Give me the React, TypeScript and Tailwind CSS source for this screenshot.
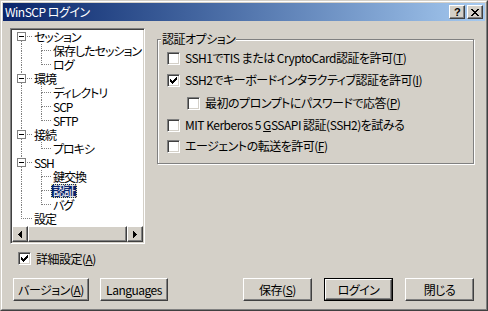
import React from 'react';

// Win2000 style 3D edges
const raised =
  'border border-t-white border-l-white border-r-[#404040] border-b-[#404040] shadow-[inset_-1px_-1px_0_#808080]';
const sunken =
  'border border-t-[#808080] border-l-[#808080] border-r-white border-b-white shadow-[inset_1px_1px_0_#404040,inset_-1px_-1px_0_#d4d0c8]';

type TreeItem = { t: string; l: 0 | 1; first?: boolean; last?: boolean; exp?: boolean; sel?: boolean };

const treeItems: TreeItem[] = [
  { t: 'セッション', l: 0, first: true, exp: true },
  { t: '保存したセッション', l: 1 },
  { t: 'ログ', l: 1, last: true },
  { t: '環境', l: 0, exp: true },
  { t: 'ディレクトリ', l: 1 },
  { t: 'SCP', l: 1 },
  { t: 'SFTP', l: 1, last: true },
  { t: '接続', l: 0, exp: true },
  { t: 'プロキシ', l: 1, last: true },
  { t: 'SSH', l: 0, exp: true },
  { t: '鍵交換', l: 1 },
  { t: '認証', l: 1, sel: true },
  { t: 'バグ', l: 1, last: true },
  { t: '設定', l: 0, last: true },
];

const Check: React.FC<{ checked?: boolean }> = ({ checked }) => (
  <span className={`flex h-[13px] w-[13px] shrink-0 items-center justify-center bg-white ${sunken}`}>
    {checked && (
      <svg width="7" height="7" viewBox="0 0 7 7" shapeRendering="crispEdges">
        <path d="M0 2h1v3H0zM1 3h1v3H1zM2 4h1v3H2zM3 3h1v3H3zM4 2h1v3H4zM5 1h1v3H5zM6 0h1v3H6z" fill="#000" />
      </svg>
    )}
  </span>
);

const Cell: React.FC<{ w: string; up?: boolean; down?: boolean; h?: boolean; box?: boolean }> = ({ w, up, down, h, box }) => (
  <span className={`relative flex h-[14px] shrink-0 flex-col ${w}`}>
    <span className={`ml-[9px] h-[7px] border-dotted border-[#808080] ${up ? 'border-l' : ''} ${h ? 'border-b' : ''}`} />
    <span className={`ml-[9px] h-[7px] border-dotted border-[#808080] ${down ? 'border-l' : ''}`} />
    {box && (
      <span className="absolute left-[5px] top-[2px] flex h-[9px] w-[9px] items-center justify-center border border-[#808080] bg-white">
        <span className="h-px w-[5px] bg-black" />
      </span>
    )}
  </span>
);

const TreeRow: React.FC<{ item: TreeItem }> = ({ item }) => (
  <div className="flex h-[14px] items-center">
    {item.l === 0 ? (
      <Cell w="w-[20px]" up={!item.first} down={!item.last} h box={item.exp} />
    ) : (
      <>
        <Cell w="w-[20px]" up down />
        <Cell w="w-[19px]" up down={!item.last} h />
      </>
    )}
    <span
      className={`h-[14px] whitespace-nowrap px-[1px] leading-[12px] tracking-[-1px] ${
        item.sel ? 'border border-dotted border-[#e8e4a0] bg-[#0a246a] text-white' : 'border border-transparent'
      }`}
    >
      {item.t}
    </span>
  </div>
);

const Arrow: React.FC<{ dir: 'left' | 'right' }> = ({ dir }) => (
  <span className={`flex h-[16px] w-[16px] shrink-0 items-center justify-center bg-[#d4d0c8] ${raised}`}>
    <svg width="4" height="7" viewBox="0 0 4 7" shapeRendering="crispEdges">
      {dir === 'left' ? (
        <path d="M0 3h1v1H0zM1 2h1v3H1zM2 1h1v5H2zM3 0h1v7H3z" fill="#000" />
      ) : (
        <path d="M3 3h1v1H3zM2 2h1v3H2zM1 1h1v5H1zM0 0h1v7H0z" fill="#000" />
      )}
    </svg>
  </span>
);

const Btn: React.FC<{ w: string; isDefault?: boolean; children: React.ReactNode }> = ({ w, isDefault, children }) =>
  isDefault ? (
    <span className={`flex h-[23px] border border-black ${w}`}>
      <span className={`flex flex-1 items-center justify-center bg-[#d4d0c8] ${raised}`}>{children}</span>
    </span>
  ) : (
    <span className={`flex h-[23px] items-center justify-center bg-[#d4d0c8] ${raised} ${w}`}>{children}</span>
  );

const OptRow: React.FC<{ mt: string; indent?: boolean; checked?: boolean; children: React.ReactNode }> = ({ mt, indent, checked, children }) => (
  <div className={`flex h-[14px] items-center gap-[5px] ${mt} ${indent ? 'ml-[20px]' : ''}`}>
    <Check checked={checked} />
    <span className="whitespace-nowrap leading-[14px]">{children}</span>
  </div>
);

const App: React.FC = () => {
  return (
    <div className="h-[311px] w-[488px] border border-t-[#d4d0c8] border-l-[#d4d0c8] border-r-[#404040] border-b-[#404040] bg-[#d4d0c8] font-['Noto_Sans_CJK_JP',sans-serif] text-[12px] tracking-[-0.5px] text-black [font-feature-settings:'palt']">
      <div className="flex h-full flex-col border border-t-white border-l-white border-r-[#808080] border-b-[#808080] p-[1px]">
        {/* title bar */}
        <div className="flex h-[18px] shrink-0 items-center justify-between bg-linear-to-r from-[#0a246a] to-[#a6caf0] pl-[2px] pr-[2px]">
          <span className="leading-[14px] text-white">WinSCP ログイン</span>
          <div className="flex gap-[2px]">
            <span className={`flex h-[14px] w-[16px] items-center justify-center bg-[#d4d0c8] ${raised}`}>
              <span className="font-['Liberation_Sans',sans-serif] text-[11px] font-bold leading-[11px]">?</span>
            </span>
            <span className={`flex h-[14px] w-[16px] items-center justify-center bg-[#d4d0c8] ${raised}`}>
              <svg width="8" height="7" viewBox="0 0 8 7" shapeRendering="crispEdges">
                <path d="M0 0h2v1H0zM6 0h2v1H6zM1 1h2v1H1zM5 1h2v1H5zM2 2h4v1H2zM3 3h2v1H3zM2 4h4v1H2zM1 5h2v1H1zM5 5h2v1H5zM0 6h2v1H0zM6 6h2v1H6z" fill="#000" />
              </svg>
            </span>
          </div>
        </div>

        {/* body */}
        <div className="flex flex-1 flex-col pl-[7px]">
          <div className="mt-[7px] flex gap-[12px]">
            {/* tree */}
            <div className={`flex h-[216px] w-[135px] shrink-0 flex-col overflow-hidden bg-white p-[1px] ${sunken}`}>
              <div className="flex flex-col">
                {treeItems.map((it) => (
                  <TreeRow key={it.t} item={it} />
                ))}
              </div>
              <div className="mt-auto flex h-[16px]">
                <Arrow dir="left" />
                <span className={`flex-1 bg-[#d4d0c8] ${raised}`} />
                <Arrow dir="right" />
              </div>
            </div>

            {/* group box */}
            <div className="relative mt-[11px] h-[125px] w-[317px] border border-[#808080] shadow-[inset_1px_1px_0_#fff,1px_1px_0_#fff]">
              <span className="absolute -top-[8px] left-[3px] bg-[#d4d0c8] px-[1px] leading-[14px]">認証オプション</span>
              <div className="flex flex-col pl-[9px]">
                <OptRow mt="mt-[11px]">
                  SSH1でTIS または CryptoCard認証を許可(<u>T</u>)
                </OptRow>
                <OptRow mt="mt-[8px]" checked>
                  SSH2でキーボードインタラクティブ認証を許可(<u>I</u>)
                </OptRow>
                <OptRow mt="mt-[9px]" indent>
                  最初のプロンプトにパスワードで応答(<u>P</u>)
                </OptRow>
                <OptRow mt="mt-[8px]">
                  MIT Kerberos 5 <u>G</u>SSAPI 認証(SSH2)を試みる
                </OptRow>
                <OptRow mt="mt-[7px]">
                  エージェントの転送を許可(<u>F</u>)
                </OptRow>
              </div>
            </div>
          </div>

          <div className="ml-[8px] mt-[8px] flex h-[13px] items-center gap-[5px]">
            <Check checked />
            <span className="leading-[14px]">
              詳細設定(<u>A</u>)
            </span>
          </div>

          <div className="ml-[3px] mt-[13px] flex items-center">
            <Btn w="w-[76px]">
              バージョン(<u>A</u>)
            </Btn>
            <span className="ml-[11px]">
              <Btn w="w-[68px]">Languages</Btn>
            </span>
            <span className="ml-[75px]">
              <Btn w="w-[69px]">
                保存(<u>S</u>)
              </Btn>
            </span>
            <span className="ml-[12px]">
              <Btn w="w-[69px]" isDefault>
                ログイン
              </Btn>
            </span>
            <span className="ml-[12px]">
              <Btn w="w-[69px]">閉じる</Btn>
            </span>
          </div>
        </div>
      </div>
    </div>
  );
};

export default App;
